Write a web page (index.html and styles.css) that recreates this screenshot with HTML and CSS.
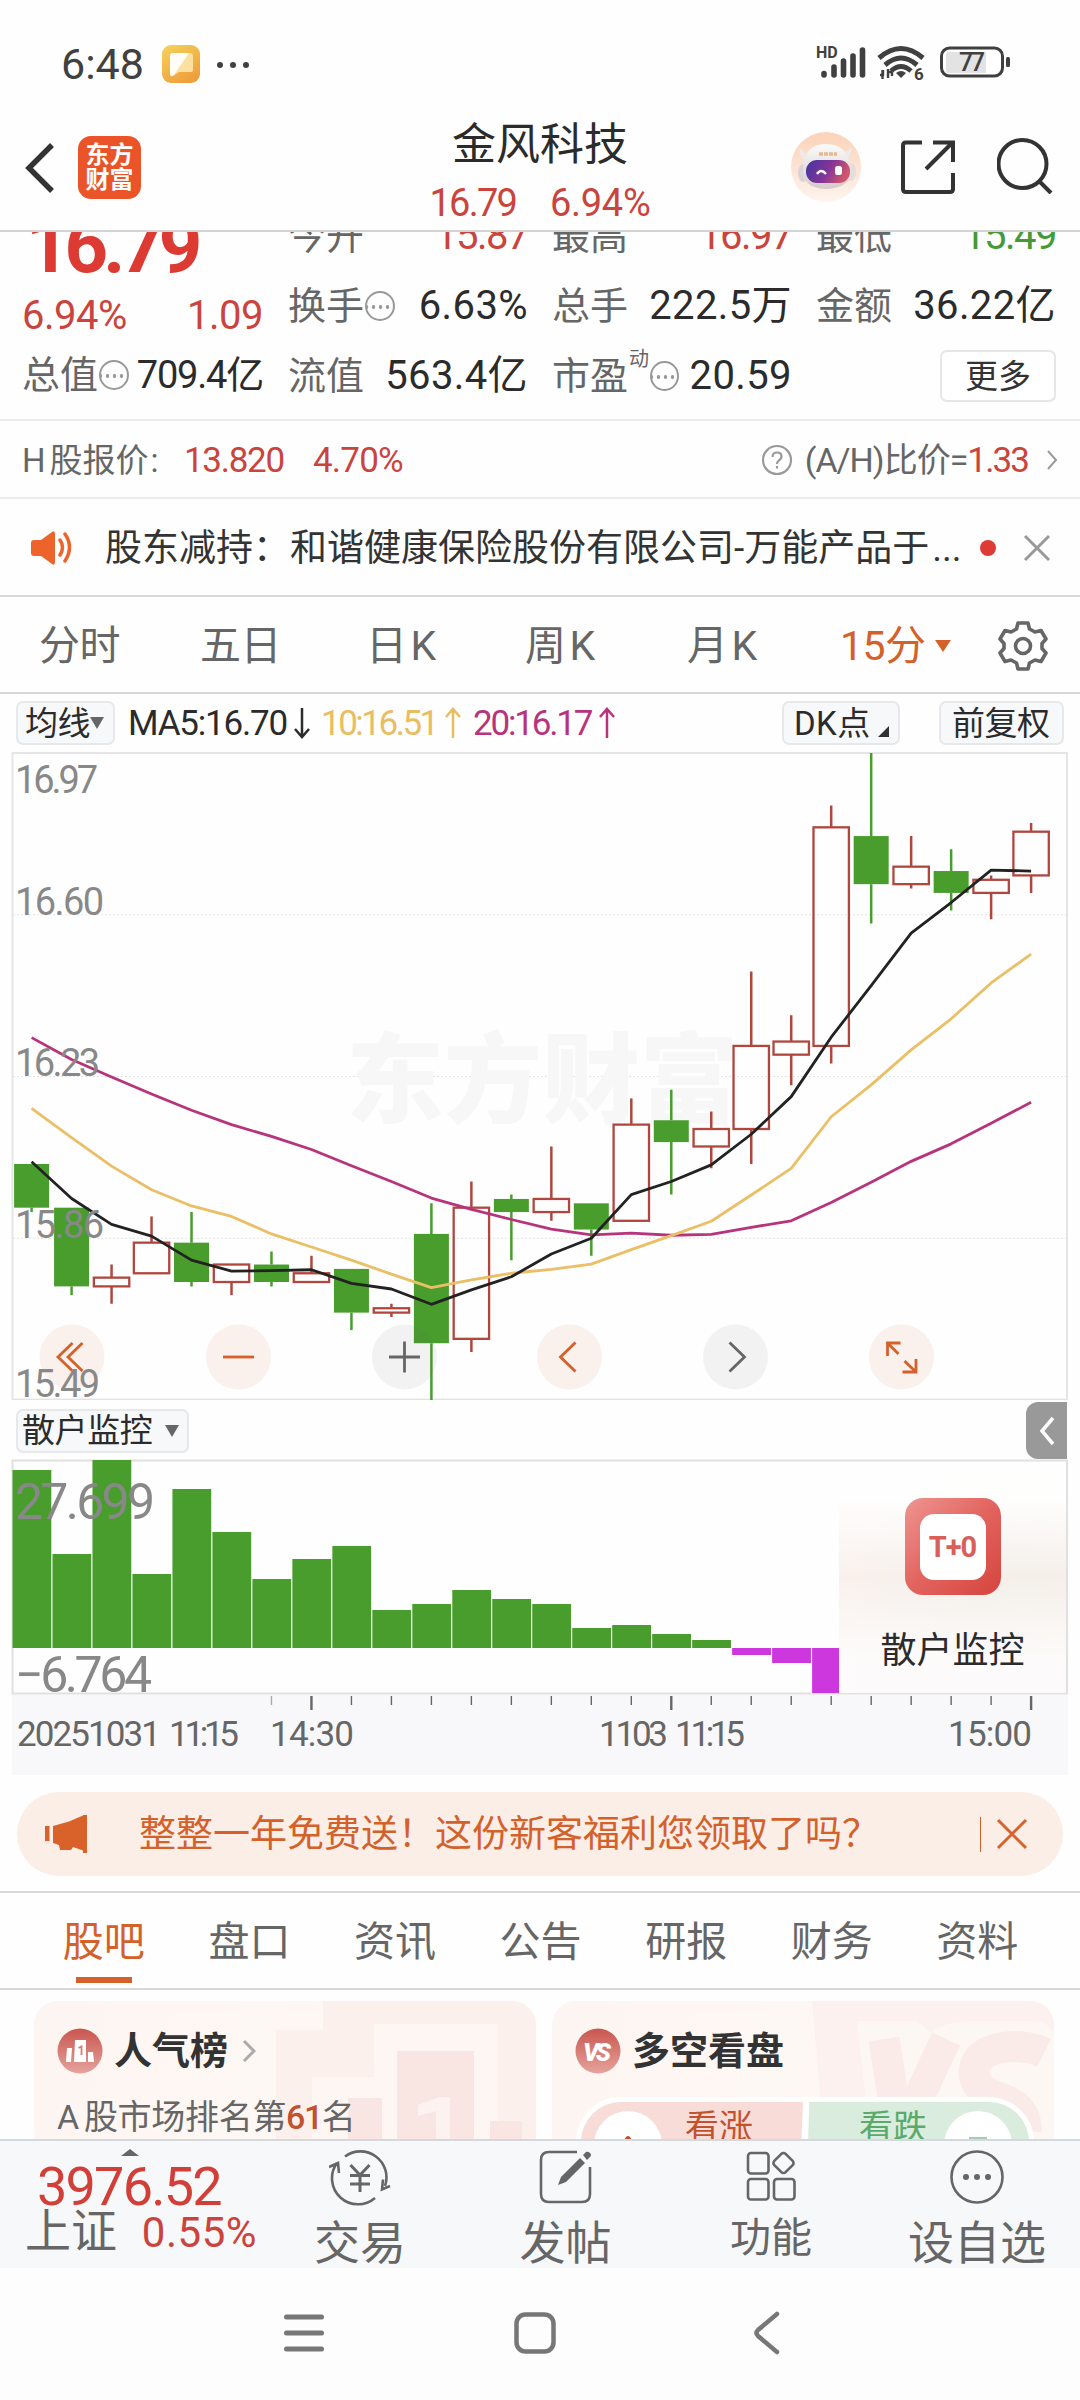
FILE: index.html
```html
<!DOCTYPE html>
<html lang="zh-CN">
<head>
<meta charset="utf-8">
<title>金风科技</title>
<link rel="stylesheet" href="styles.css">
</head>
<body>
<div class="screen">
  <div class="status">
    <span class="clock">6:48</span>
    <svg class="app-ico" width="38" height="38" viewBox="0 0 38 38"><defs><linearGradient id="gy" x1="0" y1="0" x2="0.6" y2="1"><stop offset="0" stop-color="#f5d35c"/><stop offset="1" stop-color="#efa03c"/></linearGradient></defs><rect width="38" height="38" rx="9" fill="url(#gy)"/><path d="M8 11a3 3 0 0 1 3-3h17a3 3 0 0 1 3 3v14a2 2 0 0 1-2 2H17l-6 4q-3 1-3-2z" fill="#fbe0a0"/><path d="M8 11a3 3 0 0 1 3-3h16L12 30q-4 2-4-1z" fill="#fffdf5"/></svg>
    <svg class="more-dots" width="36" height="8" viewBox="0 0 36 8" fill="#404040"><circle cx="4" cy="4" r="3"/><circle cx="17" cy="4" r="3"/><circle cx="30" cy="4" r="3"/></svg>
    <svg class="status-right" width="200" height="40" viewBox="0 0 200 40">
      <text class="hd" x="1" y="14">HD</text>
      <g stroke="#404040" stroke-width="5.6" stroke-linecap="round"><path d="M9 31v-1.500M19 31v-8M28.500 31v-14M38 31v-19M47.500 31V6"/></g>
      <g fill="none" stroke="#404040" stroke-width="5"><path d="M64 14q22-19 44 0"/><path d="M70 21q16-14 32 0"/><path d="M76 27q10-9 20 0"/></g>
      <path d="M81 29q5-4 10 0l-5 5z" fill="#404040"/>
      <path d="M65 31h3v-5M67.500 26v9M73 34v-9M73 28h4v4" stroke="#404040" stroke-width="2.400" fill="none"/>
      <text class="six" x="99" y="36">6</text>
      <rect x="126.500" y="4" width="61" height="28" rx="8" fill="#fff" stroke="#404040" stroke-width="3"/>
      <path d="M133 8h38v21h-38q-2 0-2-3v-15q0-3 2-3z" fill="#e3e3e3"/>
      <text class="batt" x="144" y="27" textLength="26">77</text>
      <rect x="191" y="13" width="4" height="10" rx="1.500" fill="#404040"/>
    </svg>
  </div>

  <header class="header">
    <svg class="back" width="30" height="52" viewBox="0 0 30 52"><path d="M27 3L4 26l23 23" fill="none" stroke="#333" stroke-width="5.500"/></svg>
    <div class="logo"><span>东方</span><span>财富</span></div>
    <div class="title"><div class="name">金风科技</div><div class="sub"><span>16.79</span><span class="pct">6.94%</span></div></div>
    <svg class="robot" width="70" height="70" viewBox="0 0 70 70"><defs><linearGradient id="rb" x1="0" y1="0" x2="0" y2="1"><stop offset="0" stop-color="#fbd2b8"/><stop offset="1" stop-color="#fef4ee"/></linearGradient><linearGradient id="vs" x1="0" y1="0" x2="1" y2="0.300"><stop offset="0" stop-color="#4433a0"/><stop offset="0.600" stop-color="#863597"/><stop offset="1" stop-color="#cf566c"/></linearGradient><linearGradient id="hd" x1="0" y1="0" x2="0" y2="1"><stop offset="0" stop-color="#fbfafa"/><stop offset="1" stop-color="#d5cbcb"/></linearGradient></defs><circle cx="35" cy="35" r="35" fill="url(#rb)"/><path d="M9 16q-2 8 5 12l7-6q-8 0-12-6zM60 15q2 9-6 12l-6-6q8 0 12-6z" fill="#f0e9e8"/><ellipse cx="12" cy="41" rx="5" ry="9" fill="#d9d3d6"/><ellipse cx="60" cy="40" rx="5" ry="9" fill="#e5dcdd"/><path d="M12 36Q13 12 35 12t25 24q2 20-25 21-25-1-23-21z" fill="url(#hd)"/><rect x="15" y="28" width="44" height="23" rx="11" fill="url(#vs)"/><path d="M28 22h18" stroke="#e7b894" stroke-width="3.500" stroke-dasharray="4 1"/><path d="M26 42q4-6 9 0" fill="none" stroke="#fff" stroke-width="2.400"/><rect x="44" y="34" width="7" height="9" rx="2.500" fill="#fff"/></svg>
    <svg class="share" width="54" height="54" viewBox="0 0 54 54" fill="none" stroke="#333" stroke-width="4"><path d="M21 2.500H5Q2 2.500 2 5.500V49q0 3 3 3h44q3 0 3-3V33M32 2.500h20V22M51 3L25 29"/></svg>
    <svg class="search" width="56" height="56" viewBox="0 0 56 56" fill="none" stroke="#333" stroke-width="4"><circle cx="25.500" cy="26" r="24"/><path d="M42 43l12 12"/></svg>
  </header>

  <section class="quote">
    <div class="q-main">
      <div class="big">16.79</div>
      <div class="chg"><span>6.94%</span><span>1.09</span></div>
      <div class="cell total"><span class="lb">总值</span><i class="tip"></i><span class="val">709.4亿</span></div>
    </div>
    <div class="q-grid">
      <div class="cell"><span class="lb">今开</span><span class="val red">15.87</span></div>
      <div class="cell"><span class="lb">最高</span><span class="val red">16.97</span></div>
      <div class="cell"><span class="lb">最低</span><span class="val green">15.49</span></div>
      <div class="cell"><span class="lb">换手</span><i class="tip"></i><span class="val">6.63%</span></div>
      <div class="cell"><span class="lb">总手</span><span class="val">222.5万</span></div>
      <div class="cell"><span class="lb">金额</span><span class="val">36.22亿</span></div>
      <div class="cell"><span class="lb">流值</span><span class="val">563.4亿</span></div>
      <div class="cell"><span class="lb">市盈</span><sup>动</sup><i class="tip"></i><span class="val">20.59</span></div>
      <div class="cell end"><button class="more">更多</button></div>
    </div>
  </section>

  <section class="hshare">
    <span class="h-lb">H<b>股报价</b>:</span><span class="red h-p">13.820</span><span class="red h-c">4.70%</span>
    <svg class="q-ico" width="32" height="32" viewBox="0 0 32 32" fill="none" stroke="#999" stroke-width="2.200"><circle cx="16" cy="16" r="14"/><path d="M11.500 13q0-4.500 4.500-4.500t4.500 4q0 2.500-3 4.300-1.500 1-1.500 3.200M16 22v2.500"/></svg>
    <span class="ah">(A/H)比价=</span><span class="red ahv">1.33</span>
    <svg class="chev" width="12" height="22" viewBox="0 0 12 22"><path d="M2 2l8 9-8 9" fill="none" stroke="#999" stroke-width="2"/></svg>
  </section>

  <section class="notice">
    <svg width="44" height="38" viewBox="0 0 44 38"><path d="M4 11h7L22 3q3-2 3 2v28q0 4-3 2l-11-8H4q-3 0-3-3V14q0-3 3-3z" fill="#ec642b"/><path d="M30 11q5 7 0 15M35 5q9 13 0 27" fill="none" stroke="#ec642b" stroke-width="3.500" stroke-linecap="round"/></svg>
    <span class="n-txt">股东减持：和谐健康保险股份有限公司-万能产品于<em>...</em></span>
    <i class="dot"></i>
    <svg width="28" height="28" viewBox="0 0 28 28"><path d="M2 2l24 24M26 2L2 26" stroke="#999" stroke-width="3"/></svg>
  </section>

  <nav class="periods">
    <span>分时</span><span>五日</span><span>日K</span><span>周K</span><span>月K</span><span class="on">15分<i></i></span>
    <svg width="50" height="50" viewBox="0 0 50 50" fill="none" stroke="#666" stroke-width="3.600" stroke-linejoin="round"><path d="M20 2h10l1.500 6 5.500 3 6-1.500L48 18l-4 4.500v5L48 32l-5 8.500-6-1.500-5.500 3L30 48H20l-1.500-6-5.500-3-6 1.500L2 32l4-4.500v-5L2 18l5-8.500 6 1.500 5.500-3z"/><circle cx="25" cy="25" r="7.500"/></svg>
  </nav>

  <div class="ma-row">
    <span class="chip c1">均线<i class="tri"></i></span>
    <span class="m5">MA5:16.70<svg width="18" height="32" viewBox="0 0 18 32"><path d="M9 1v28M2 22l7 8 7-8" fill="none" stroke="currentColor" stroke-width="2.500"/></svg></span>
    <span class="m10">10:16.51<svg width="18" height="32" viewBox="0 0 18 32"><path d="M9 31V3M2 10l7-8 7 8" fill="none" stroke="currentColor" stroke-width="2.500"/></svg></span>
    <span class="m20">20:16.17<svg width="18" height="32" viewBox="0 0 18 32"><path d="M9 31V3M2 10l7-8 7 8" fill="none" stroke="currentColor" stroke-width="2.500"/></svg></span>
    <span class="chip c2">DK点<i class="corner"></i></span>
    <span class="chip c3">前复权</span>
  </div>

  <svg class="kline" id="kline" width="1080" height="650" viewBox="0 750 1080 650"></svg>

  <div class="sub-head">
    <span class="chip c4">散户监控<i class="tri"></i></span>
    <span class="handle"><svg width="18" height="30" viewBox="0 0 18 30"><path d="M15 2L4 15l11 13" fill="none" stroke="#fff" stroke-width="3.500"/></svg></span>
  </div>

  <div class="monitor">
    <svg id="bars" width="1080" height="236" viewBox="0 1459 1080 236"></svg>
    <div class="promo">
      <div class="t0"><span>T+0</span></div>
      <div class="t0-lb">散户监控</div>
    </div>
  </div>

  <svg class="axis" id="axis" width="1056" height="80" viewBox="12 1695 1056 80"></svg>

  <div class="banner">
    <svg width="44" height="40" viewBox="0 0 44 40" fill="#d9622b"><rect x="0" y="12" width="4.500" height="15"/><path d="M8 12l16-4.500L38 1.500V1h4v38h-4v-2.500l-10-3.500-2 3H15l-1-5-6-2z"/></svg>
    <span>整整一年免费送！这份新客福利您领取了吗？</span>
    <i></i>
    <svg width="32" height="32" viewBox="0 0 32 32"><path d="M2 2l28 28M30 2L2 30" stroke="#d9622b" stroke-width="3"/></svg>
  </div>

  <nav class="tabs">
    <span class="on">股吧</span><span>盘口</span><span>资讯</span><span>公告</span><span>研报</span><span>财务</span><span>资料</span>
  </nav>

  <section class="cards">
    <div class="card">
      <svg class="deco" width="260" height="138" viewBox="0 0 260 138"><path d="M0 29h47V0h213v138H0z" fill="#fcf0ed"/><path d="M36 76h62V23h124v115H36z" fill="#fdf6f3"/><path d="M72 97h34v41H72zM121 50h77v88h-77zM214 120h32v18h-32z" fill="#f9e6e3"/><path class="ghost1" d="M142 104l22-8h10v42h-14v-28l-18 5z"/></svg>
      <div class="c-head"><svg width="46" height="46" viewBox="0 0 46 46"><defs><linearGradient id="rd" x1="0" y1="0" x2="0" y2="1"><stop offset="0" stop-color="#c9564f"/><stop offset="1" stop-color="#e5a39c"/></linearGradient></defs><circle cx="23" cy="23" r="22.500" fill="url(#rd)"/><path d="M10 20h5l-1 14H9zM18 12h11v22H17zM31 24h5l1 10h-6z" fill="#fff"/><path d="M21.500 20l3-1.500V27" fill="none" stroke="#d97b74" stroke-width="1.800"/></svg><b>人气榜</b><svg width="14" height="24" viewBox="0 0 14 24"><path d="M2 2l10 10L2 22" fill="none" stroke="#aaa" stroke-width="3"/></svg></div>
      <div class="rank">A<span>股市场排名第</span><b>61</b>名</div>
    </div>
    <div class="card">
      <svg class="deco" width="250" height="138" viewBox="0 0 250 138"><path d="M8 0h242v138H20z" fill="#fcf1ee"/><path d="M53 20h60l14 12q14-12 40-12h60q23 0 23 20v98H66z" fill="#fdf7f4"/><g fill="none" stroke="#fbebe8" stroke-width="31"><path d="M80 38l14 90h6l42-90"/><path d="M240 52q-16-8-38-6-30 4-32 24-1 18 24 26 30 10 28 34"/></g></svg>
      <div class="c-head"><svg width="46" height="46" viewBox="0 0 46 46"><circle cx="23" cy="23" r="22.500" fill="url(#rd)"/><text class="vs" x="8" y="33" textLength="28">VS</text></svg><b>多空看盘</b></div>
      <div class="vote">
        <div class="up"><i><svg width="12" height="8" viewBox="0 0 12 8"><path d="M0 8l4-6q2-2 4 0l4 6z" fill="#c2512f"/></svg></i><span>看涨</span></div>
        <div class="down"><span>看跌</span><i><svg width="18" height="4" viewBox="0 0 18 4"><path d="M0 4V2h18v2z" fill="#a9cdb4"/></svg></i></div>
      </div>
    </div>
  </section>

  <footer class="bottom">
    <div class="index"><i></i><div class="ix">3976.52</div><div class="ix2"><span>上证</span><b>0.55%</b></div></div>
    <div class="bt"><svg width="62" height="58" viewBox="0 0 62 58" fill="none" stroke="#666" stroke-width="2.600"><path d="M16 8.500A26 26 0 0 1 56 38M46 50A26 26 0 0 1 8 15M0 19l9-4 1 10M61 38l-8 3.500 1-10"/><path d="M21.500 17l9.500 10 9.500-10M31 27v17M21 27.500h20M21 36h20" stroke-width="3"/></svg><span>交易</span></div>
    <div class="bt"><svg width="54" height="58" viewBox="0 0 54 58" fill="none" stroke="#666" stroke-width="2.600"><path d="M38 4H10q-8 0-8 8v34q0 8 8 8h33q8 0 8-8V19"/><path d="M19 37l3-8 19-19 5 5-19 19z" fill="#666" stroke="none"/><path d="M44 7l3-3q2-1 4 1t0 4l-3 3z" fill="#666" stroke="none"/></svg><span>发帖</span></div>
    <div class="bt mid"><svg width="50" height="58" viewBox="0 0 50 58" fill="none" stroke="#666" stroke-width="2.600"><rect x="2" y="5" width="20.500" height="20.500" rx="3"/><rect x="2" y="31" width="20.500" height="20.500" rx="3"/><rect x="28" y="31" width="20.500" height="20.500" rx="3"/><rect x="29.500" y="7" width="16" height="16" rx="3" transform="rotate(45 37.500 15)"/></svg><span>功能</span></div>
    <div class="bt"><svg width="54" height="58" viewBox="0 0 54 58"><circle cx="27" cy="29" r="25.500" fill="none" stroke="#666" stroke-width="2.600"/><g fill="#666"><circle cx="16" cy="29" r="3"/><circle cx="27" cy="29" r="3"/><circle cx="38" cy="29" r="3"/></g></svg><span>设自选</span></div>
  </footer>

  <div class="sysnav">
    <svg width="40" height="40" viewBox="0 0 40 40"><path d="M2.500 4h35M2.500 20h35M2.500 36h35" stroke="#777" stroke-width="5" stroke-linecap="round"/></svg>
    <svg width="42" height="42" viewBox="0 0 42 42"><rect x="2.500" y="2.500" width="37" height="37" rx="9" fill="none" stroke="#777" stroke-width="4.500"/></svg>
    <svg width="28" height="44" viewBox="0 0 28 44"><path d="M24 3L5 19q-3 3 0 6l19 16" fill="none" stroke="#777" stroke-width="4.500" stroke-linecap="round"/></svg>
  </div>
</div>
<script src="chart.js"></script>
</body>
</html>
```

FILE: styles.css
```css
* { box-sizing: border-box; }
body { margin: 0; background: #fdfdfd; }
.screen { width: 1080px; height: 2400px; overflow: hidden; background: #fefefe; color: #2b2b2b;
  font-family: Roboto, "Noto Sans CJK SC", sans-serif; font-size: 38px; line-height: 1; display: flex; flex-direction: column; }
.screen > * { flex: none; }
i, em, b { font-style: normal; font-weight: inherit; }
svg { display: block; flex: none; }
span, b { white-space: nowrap; }
.red { color: #cb433d; }
.green { color: #459a35; }

.status { height: 128px; display: flex; align-items: center; padding: 0 65px 0 61px; }
.clock { font-size: 43px; color: #404040; width: 101px; }
.more-dots { margin-left: 16px; margin-top: 2px; }
.status-right { margin-left: auto; }
.hd { font: 700 16px Roboto, sans-serif; fill: #404040; }
.six { font: 700 17px Roboto, sans-serif; fill: #404040; }
.batt { font: 500 25px Roboto, sans-serif; fill: #404040; }

.header { height: 104px; border-bottom: 2px solid #d4d4d4; display: flex; align-items: flex-start; padding-left: 25px; }
.back { margin-top: 14px; }
.logo { margin: 8px 0 0 23px; width: 63px; height: 63px; border-radius: 13px; background: #ea5428; color: #fff; font-size: 24px; line-height: 25px; font-weight: 700; display: flex; flex-direction: column; align-items: center; justify-content: center; }
.title { margin-left: 149px; width: 500px; text-align: center; }
.name { font-size: 44px; line-height: 48px; margin-top: -7px; }
.sub { margin-top: 15px; font-size: 38px; letter-spacing: -1.8px; color: #cb433d; display: flex; justify-content: center; gap: 34px; }
.sub .pct { letter-spacing: -0.3px; }
.robot { margin: 4px 0 0 1px; }
.share { margin: 12px 0 0 40px; }
.search { margin: 10px 0 0 42px; }

.quote { height: 189px; border-bottom: 2px solid #ececec; overflow: hidden; display: flex; padding: 0 23px 0 22px; gap: 25px; }
.q-main { width: 241px; color: #cb433d; }
.big { font-size: 76px; font-weight: 700; line-height: 76px; letter-spacing: -5px; margin: -24px 0 0 4px; color: #dc3a32; }
.chg { display: flex; justify-content: space-between; font-size: 40px; letter-spacing: -0.5px; line-height: 40px; margin-top: 12px; }
.cell { display: flex; align-items: center; height: 70px; }
.total { margin-top: 4px; }
.lb { color: #666; }
.val { margin-left: auto; color: #2b2b2b; font-size: 40px; letter-spacing: 0.4px; }
.val.red, .val.green { letter-spacing: -1.5px; }
.val.red { color: #cb433d; } .val.green { color: #459a35; }
.total .val { font-size: 38px; letter-spacing: -1.2px; }
.tip { width: 30px; height: 30px; border: 2px solid #999; border-radius: 50%; margin-left: 1px; background: radial-gradient(circle, #999 1.600px, transparent 2.100px) 3px 12px / 7px 4px repeat-x; }
.q-grid { flex: 1; display: grid; grid-template-columns: 240px 240px 240px; column-gap: 24px; grid-auto-rows: 70px; margin-top: -31px; }
sup { font-size: 20px; color: #666; align-self: flex-start; margin: 8px 0 0 1px; line-height: 20px; }
sup ~ .val { margin: 0 auto 0 11px; }
.end { justify-content: flex-end; }
.more { width: 116px; height: 52px; border: 2px solid #e6e6e6; border-radius: 7px; background: #fff; font: 33px/1 Roboto, "Noto Sans CJK SC", sans-serif; color: #333; padding: 0; }

.hshare { height: 78px; border-bottom: 2px solid #ececec; display: flex; align-items: center; padding: 2px 22px 0 22px; font-size: 35px; color: #666; }
.h-lb { width: 162px; font-size: 33px; }
.h-lb b { margin: 0 2px 0 4px; }
.h-p { width: 129px; letter-spacing: -1.300px; }
.h-c { letter-spacing: -0.800px; }
.q-ico { margin-left: auto; }
.ah { margin-left: 12px; letter-spacing: -1px; font-size: 34px; }
.ahv { letter-spacing: -1.900px; margin-right: 18px; }

.notice { height: 98px; border-bottom: 2px solid #d8d8d8; display: flex; align-items: center; padding: 2px 29px 0 30px; color: #333; }
.n-txt { margin-left: 31px; width: 866px; font-size: 37px; }
.n-txt em { margin-left: 3px; }
.dot { width: 16px; height: 16px; border-radius: 50%; background: #dd3b33; margin: 0 0 0 9px; }
.notice svg:last-child { margin-left: auto; }

.periods { height: 97px; border-bottom: 2px solid #d8d8d8; display: flex; align-items: center; padding: 3px 0 0 39px; font-size: 41px; color: #666; }
.periods span { width: 161px; letter-spacing: -0.5px; }
.periods span:nth-child(3), .periods span:nth-child(4), .periods span:nth-child(5) { letter-spacing: 3.5px; }
.periods span:nth-child(3) { width: 159px; margin-left: 5px; }
.periods span:nth-child(4) { width: 162px; }
.periods span:nth-child(5) { width: 154px; }
.periods .on { width: 158px; color: #d4602a; display: flex; align-items: center; margin-left: -1px; }
.periods .on i { margin-left: 9px; border: 8px solid transparent; border-top: 12px solid #d4602a; border-bottom: 0; }

.ma-row { height: 56px; display: flex; align-items: center; padding: 2px 16px 0 16px; font-size: 35px; }
.ma-row > span:not(.chip) { display: flex; align-items: center; letter-spacing: -1.200px; }
.chip { height: 44px; border: 2px solid #e6e8eb; border-radius: 7px; background: #f7f8fa; display: flex; align-items: center; font-size: 33px; padding-left: 7px; letter-spacing: -0.5px; }
.tri { border: 7px solid transparent; border-top: 12px solid #666; border-bottom: 0; }
.c1 { width: 99px; }
.m5 { margin-left: 13px; width: 193px; }
.m5 svg { margin-left: 6px; }
.ma-row > .m10:not(.chip) { width: 152px; color: #e9bd62; letter-spacing: -2.500px; }
.ma-row > .m20:not(.chip) { color: #b7347d; letter-spacing: -2.200px; }
.m10 svg, .m20 svg { margin-left: 7px; }
.c2 { width: 118px; margin-left: auto; padding-left: 10px; letter-spacing: 0.4px; }
.corner { border-left: 11px solid transparent; border-bottom: 11px solid #333; align-self: flex-end; margin: 0 0 6px 7px; }
.c3 { width: 125px; margin-left: 39px; padding-left: 11px; }

.kline text { font: 38px Roboto, sans-serif; fill: #888; }
.kline .wm { font: 900 98px "Noto Sans CJK SC", sans-serif; fill: #f7f7f7; }

.sub-head { height: 59px; display: flex; align-items: center; justify-content: space-between; padding: 2px 13px 0 16px; }
.c4 { width: 173px; padding-left: 4px; letter-spacing: -0.400px; }
.c4 .tri { margin-left: 13px; }
.handle { width: 41px; height: 57px; border-radius: 12px 0 0 12px; background: #999; display: flex; align-items: center; justify-content: center; }
.monitor { height: 236px; position: relative; }
.monitor text { font: 50px Roboto, sans-serif; fill: #888; }
.promo { position: absolute; left: 839px; top: 3px; width: 227px; height: 231px; display: flex; flex-direction: column; align-items: center; background: linear-gradient(180deg, rgba(255,255,255,.95) 15%, rgba(255,255,255,0) 50%, rgba(253,252,252,.9) 85%), linear-gradient(90deg, #faf1ed, #f3efe9 60%, #f6efe9); }
.t0 { width: 96px; height: 97px; margin: 36px 0 0 0; border-radius: 18px; background: linear-gradient(135deg, #ee9591, #e2635e 50%, #d6443e); display: flex; align-items: center; justify-content: center; }
.t0 span { width: 66px; height: 66px; border-radius: 14px; background: #fff; color: #d9605a; font-size: 29px; font-weight: 700; line-height: 66px; text-align: center; letter-spacing: -1px; }
.t0-lb { font-size: 36px; margin-top: 38px; color: #2b2b2b; }
.axis { margin-left: 12px; background: #f8f8fa; }
.axis text { font: 35px Roboto, sans-serif; fill: #666; }

.banner { height: 84px; margin: 17px 17px 0; border-radius: 42px; background: #faeee7; display: flex; align-items: center; padding: 0 35px 0 28px; color: #d4602a; font-size: 37px; }
.banner span { margin-left: 50px; }
.banner i { width: 1px; height: 35px; background: #d4602a; margin: 0 15px 0 auto; }

.tabs { height: 99px; margin-top: 15px; border-top: 2px solid #d8d8d8; border-bottom: 2px solid #d8d8d8; display: grid; grid-template-columns: repeat(7, 145.600px); padding-left: 31px; color: #666; font-size: 41px; line-height: 98px; text-align: center; overflow: hidden; }
.tabs .on { color: #d4602a; background: linear-gradient(#d4602a, #d4602a) 50% 84px / 56px 6px no-repeat; }

.cards { height: 149px; overflow: hidden; padding: 11px 26px 0 34px; display: grid; grid-template-columns: 502px 502px; gap: 16px; }
.card { height: 180px; border-radius: 24px; background: linear-gradient(100deg, #fdf5f2, #fef8f5 60%, #fdf3f0); position: relative; overflow: hidden; padding: 27px 23px 0; }
.deco { position: absolute; right: 0; top: 0; }
.c-head { display: flex; align-items: center; position: relative; }
.c-head b { font-size: 38px; font-weight: 700; color: #333; margin: 0 14px 0 11px; }
.vs { font: italic 900 25px Roboto, sans-serif; fill: #fff; }
.ghost1 { fill: #fcf3f0; }
.rank { font-size: 34px; color: #666; margin-top: 26px; position: relative; letter-spacing: -0.3px; }
.rank span { margin-left: 5px; }
.rank b { color: #c2512f; font-weight: 500; letter-spacing: -1.500px; }
.vote { position: relative; margin: 23px 0 0 1px; width: 458px; height: 90px; border: 5px solid #fff; border-radius: 45px; display: flex; gap: 4px; background: #fff; overflow: hidden; font-size: 34px; }
.up, .down { flex: none; width: 222px; display: flex; align-items: flex-start; padding-top: 9px; }
.up { background: #f7dcd8; color: #c2512f; padding-left: 13px; clip-path: polygon(0 0, 100% 0, 98.500% 100%, 0 100%); }
.down { background: #d9ecdd; color: #5aab6b; padding-left: 52px; clip-path: polygon(1% 0, 100% 0, 100% 100%, 0 100%); }
.vote span { margin-top: -1px; }
.vote i { width: 68px; height: 68px; border-radius: 50%; background: #fff; display: flex; justify-content: center; padding-top: 24px; }
.up span { margin-left: 23px; }
.down i { margin-left: 17px; }

.bottom { height: 129px; border-top: 2px solid #d5d8dc; background: #f7f8fa; display: grid; grid-template-columns: 257px 206px 205px 206px 206px; color: #666; }
.index { padding-left: 25px; color: #d23f38; }
.index i { display: block; margin: 8px 0 0 96px; width: 0; border: 9px solid transparent; border-bottom: 7px solid #666; border-top: 0; }
.ix { font-size: 54px; letter-spacing: -1.8px; line-height: 54px; margin: 4px 0 0 12px; }
.ix2 { display: flex; align-items: center; margin-top: -7px; color: #cb433d; font-size: 42px; }
.ix2 span { font-size: 46px; color: #666; width: 118px; }
.ix2 b { letter-spacing: 0.5px; margin-top: 5px; }
.bt { display: flex; flex-direction: column; align-items: center; font-size: 46px; padding-top: 7px; }
.bt span { margin-top: 14px; }
.mid span { font-size: 41px; margin-top: 12px; }

.sysnav { height: 132px; display: flex; align-items: center; padding: 0 0 2px 284px; background: #fdfdfd; }
.sysnav svg:nth-child(2) { margin-left: 190px; }
.sysnav svg:nth-child(3) { margin-left: 197px; }
```

FILE: chart.js
```js
const NS = "http://www.w3.org/2000/svg";
function add(parent, tag, attrs, text) {
  const el = document.createElementNS(NS, tag);
  for (const k in attrs) el.setAttribute(k, attrs[k]);
  if (text) el.textContent = text;
  parent.appendChild(el);
  return el;
}
const RED = "#b0473f", GREEN = "#489d2d";
const cx = i => 31.6 + i * 39.98;

// open, close, high, low
const candles = [
  [16.03, 15.93, 16.03, 15.92], [15.93, 15.75, 15.93, 15.73], [15.75, 15.77, 15.80, 15.71],
  [15.78, 15.85, 15.91, 15.78], [15.85, 15.76, 15.92, 15.75], [15.76, 15.80, 15.80, 15.73],
  [15.80, 15.76, 15.83, 15.75], [15.76, 15.78, 15.82, 15.76], [15.79, 15.69, 15.79, 15.65],
  [15.69, 15.70, 15.71, 15.68], [15.87, 15.62, 15.94, 15.49], [15.63, 15.93, 15.99, 15.60],
  [15.95, 15.92, 15.96, 15.81], [15.92, 15.95, 16.07, 15.90], [15.94, 15.88, 15.94, 15.82],
  [15.90, 16.12, 16.18, 15.90], [16.13, 16.08, 16.20, 15.96], [16.07, 16.11, 16.15, 16.02],
  [16.11, 16.30, 16.47, 16.03], [16.28, 16.31, 16.37, 16.21], [16.30, 16.80, 16.85, 16.26],
  [16.78, 16.67, 16.97, 16.58], [16.67, 16.71, 16.78, 16.66], [16.70, 16.65, 16.75, 16.61],
  [16.65, 16.68, 16.69, 16.59], [16.69, 16.79, 16.81, 16.65]
];
const averages = [
  ["#b7347d", [16.319,16.269,16.229,16.190,16.153,16.120,16.093,16.063,16.026,15.990,15.952,15.926,15.903,15.881,15.868,15.872,15.867,15.869,15.885,15.900,15.942,15.988,16.036,16.076,16.123,16.171]],
  ["#eabf66", [16.157,16.090,16.025,15.971,15.934,15.910,15.870,15.840,15.810,15.778,15.747,15.765,15.780,15.789,15.801,15.834,15.866,15.899,15.959,16.020,16.138,16.211,16.291,16.362,16.444,16.510]],
  ["#222", [16.035,15.951,15.892,15.865,15.810,15.785,15.786,15.788,15.757,15.744,15.709,15.742,15.772,15.824,15.860,15.960,15.990,16.028,16.098,16.184,16.320,16.438,16.558,16.628,16.702,16.700]]
];
const py = p => 753 + (16.97 - p) * 437.200;

const k = document.getElementById("kline");
for (const p of [16.60, 16.23, 15.86])
  add(k, "line", { x1: 13, x2: 1067, y1: py(p), y2: py(p), stroke: "#e4e4e4", "stroke-dasharray": "2 2" });
add(k, "text", { class: "wm", x: 346, y: 1115 }, "东方财富");
add(k, "rect", { x: 12.5, y: 753, width: 1054.5, height: 646.500, fill: "none", stroke: "#e3e3e3", "stroke-width": 1.800 });
candles.forEach(([o, c, h, l], i) => {
  const up = c > o, col = up ? RED : GREEN, top = py(Math.max(o, c)), bot = py(Math.min(o, c)), x = cx(i);
  add(k, "path", { d: `M${x} ${py(h)}V${top}M${x} ${bot}V${py(l)}`, stroke: col, "stroke-width": 2.500 });
  add(k, "rect", up
    ? { x: x - 17.700, y: top, width: 35.400, height: bot - top, fill: "none", stroke: RED, "stroke-width": 2.300 }
    : { x: x - 17.500, y: top, width: 35, height: bot - top, fill: GREEN });
});
for (const [stroke, v] of averages)
  add(k, "polyline", { points: v.map((p, i) => cx(i) + "," + py(p)).join(" "), fill: "none", stroke, "stroke-width": 2.800, "stroke-linejoin": "round" });

const OR = "#d4602a", GY = "#666";
[
  [72, OR, "M0.500-14L-14 0L0.500 14M10.500-14L-4 0L10.500 14"],
  [238.500, OR, "M-15.500 0H15.500"],
  [404.500, GY, "M-15.500 0H15.500M0-15.500V15.500"],
  [569.500, OR, "M6-14.500L-9 0L6 14.500"],
  [735.500, GY, "M-6-14.500L9 0L-6 14.500"],
  [901.500, OR, "M-14-1V-14H-1M-14-14L-3-3M14.500 2V15H1M14.500 15L3 4"]
].forEach(([x, c, d]) => {
  const g = add(k, "g", { transform: `translate(${x} 1357)` });
  add(g, "circle", { r: 32.500, fill: c, opacity: c === OR ? 0.085 : 0.080 });
  add(g, "path", { d, fill: "none", stroke: c, "stroke-width": 2.800 });
});
[["16.97", 793, 83], ["16.60", 915, 89], ["16.23", 1076, 85], ["15.86", 1238, 89], ["15.49", 1397, 85]]
  .forEach(([t, y, w]) => add(k, "text", { x: 15, y, textLength: w }, t));

// retail flow histogram
const b = document.getElementById("bars");
add(b, "rect", { x: 12.500, y: 1460.500, width: 1054.500, height: 233, fill: "none", stroke: "#e0e0e0", "stroke-width": 2 });
[178,94,188,74,159,116,69,89,102,38,44,58,49,44,20,23,14,8,-7,-15,-45].forEach((h, i) =>
  add(b, "rect", { x: 12.500 + i * 39.980, y: h > 0 ? 1648 - h : 1648, width: i === 20 ? 27 : 38.800, height: Math.abs(h), fill: h > 0 ? GREEN : "#cd37de" }));
add(b, "text", { x: 15, y: 1519, textLength: 140 }, "27.699");
add(b, "text", { x: 15, y: 1692, textLength: 137 }, "−6.764");

const a = document.getElementById("axis");
for (let i = 6; i < 26; i++) {
  const major = i === 7 || i === 16 || i === 25;
  add(a, "line", { x1: cx(i), x2: cx(i), y1: 1696, y2: major ? 1710 : 1705, stroke: i === 6 ? "#aaa" : GY, "stroke-width": major ? 2.400 : 1.400 });
}
[["20251031", 17, 144], ["11:15", 169, 70], ["14:30", 270, 84], ["1103", 599, 69], ["11:15", 675, 70], ["15:00", 948, 84]]
  .forEach(([t, x, w]) => add(a, "text", { x, y: 1746, textLength: w }, t));
```
